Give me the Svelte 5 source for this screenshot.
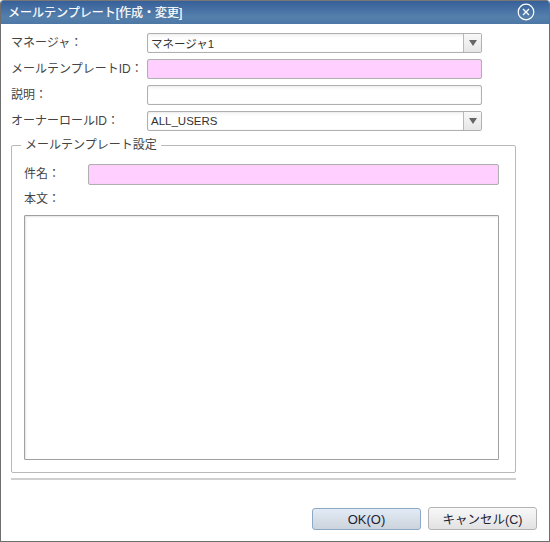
<script>
    const rows = [
        { label: 'マネージャ：', value: 'マネージャ1', select: true },
        { label: 'メールテンプレートID：', value: '', required: true },
        { label: '説明：', value: '' },
        { label: 'オーナーロールID：', value: 'ALL_USERS', select: true },
    ];
</script>

<div class="dialog">
    <div class="titlebar">
        <span class="title">メールテンプレート[作成・変更]</span>
        <svg class="close" width="18" height="18" viewBox="0 0 18 18">
            <circle cx="9" cy="9" r="7.8" fill="none" stroke="#fff" stroke-width="1.2" />
            <path d="M6 6l6 6M12 6l-6 6" fill="none" stroke="#fff" stroke-width="1.3" />
        </svg>
    </div>

    <div class="body">
        <div class="rows">
            {#each rows as row}
                <div class="row">
                    <span class="label">{row.label}</span>
                    <div class="field" class:required={row.required}>
                        <span class="value">{row.value}</span>
                        {#if row.select}
                            <span class="arrow"><i></i></span>
                        {/if}
                    </div>
                </div>
            {/each}
        </div>

        <fieldset class="group">
            <legend>メールテンプレート設定</legend>
            <div class="subject">
                <span class="label">件名：</span>
                <div class="field required"></div>
            </div>
            <div class="label body-label">本文：</div>
            <div class="textarea"></div>
        </fieldset>

        <div class="separator"></div>

        <div class="buttons">
            <button class="ok">OK(O)</button>
            <button>キャンセル(C)</button>
        </div>
    </div>
</div>

<style>
    :global(body) {
        background: #fff;
    }

    .dialog {
        box-sizing: border-box;
        width: 550px;
        height: 542px;
        display: flex;
        flex-direction: column;
        background: #fff;
        border: 1px solid #6e6e6e;
        border-top: 0;
        border-radius: 4px 4px 0 0;
        font-family: "Liberation Sans", "Noto Sans CJK JP", sans-serif;
        font-size: 12px;
        color: #444;
        overflow: hidden;
    }

    .titlebar {
        flex: none;
        height: 23px;
        display: flex;
        align-items: center;
        justify-content: space-between;
        padding: 0 6px 0 7px;
        background: linear-gradient(#37609a, #5580ac 70%, #4d78a6);
        border-top: 1px solid #777;
        color: #fff;
    }

    .title {
        font-size: 12px;
        line-height: 20px;
        -webkit-text-stroke: 0.2px #fff;
    }

    .close {
        margin-right: 8px;
        margin-top: -1px;
    }

    .body {
        flex: 1;
        display: flex;
        flex-direction: column;
        padding: 9px 12px 11px 10px;
    }

    .rows {
        display: flex;
        flex-direction: column;
        gap: 6px;
        width: 471px;
    }

    .row {
        display: flex;
        align-items: center;
    }

    .row .label {
        flex: none;
        width: 136px;
    }

    .label {
        line-height: 18px;
        white-space: nowrap;
    }

    .field {
        box-sizing: border-box;
        flex: 1;
        height: 20px;
        display: flex;
        align-items: center;
        justify-content: space-between;
        background: linear-gradient(#f2f2f2, #fff 4px);
        border: 1px solid #b0b0b0;
        border-radius: 2px;
        box-shadow: inset 0 0 1px #c8c8c8;
    }

    .field.required {
        background: #ffd0ff;
    }

    .value {
        padding-left: 3px;
        font-size: 11.5px;
        color: #333;
    }

    .arrow {
        flex: none;
        box-sizing: border-box;
        width: 18px;
        height: 18px;
        display: flex;
        align-items: center;
        justify-content: center;
        background: linear-gradient(#f8f8f8, #e6e6e6);
        border-left: 1px solid #b8b8b8;
    }

    .arrow i {
        width: 0;
        height: 0;
        border-left: 4px solid transparent;
        border-right: 4px solid transparent;
        border-top: 6px solid #666;
    }

    .group {
        box-sizing: border-box;
        width: 505px;
        height: 336px;
        margin: 6px 0 0 0;
        padding: 11px 16px 0 12px;
        border: 1px solid #b8b8b8;
        border-radius: 2px;
        min-width: 0;
    }

    legend {
        margin-left: -3px;
        padding: 0 4px;
        font-size: 12px;
        line-height: 16px;
    }

    .subject {
        display: flex;
        align-items: center;
    }

    .subject .label {
        flex: none;
        width: 64px;
        margin-top: -2px;
    }

    .subject .field {
        height: 21px;
    }

    .body-label {
        margin-top: 5px;
    }

    .textarea {
        box-sizing: border-box;
        height: 245px;
        margin-top: 7px;
        background: #fff;
        border: 1px solid #a0a0a0;
        border-radius: 1px;
        box-shadow: inset 1px 1px 2px #e4e4e4;
    }

    .separator {
        flex: none;
        width: 505px;
        height: 2px;
        margin-top: 5px;
        background: #d0d0d0;
    }

    .buttons {
        display: flex;
        justify-content: flex-end;
        align-items: flex-end;
        gap: 7px;
        margin-top: auto;
    }

    button {
        box-sizing: border-box;
        width: 109px;
        height: 23px;
        padding: 0;
        font: inherit;
        font-size: 12.5px;
        color: #223;
        background: linear-gradient(#f8f8f8, #e2e2e2);
        border: 1px solid #b4b4b4;
        border-radius: 3px;
    }

    button.ok {
        height: 22px;
        font-size: 13px;
        background: linear-gradient(#e2ebf6, #ccd3dc);
        border-color: #8ba8c6;
    }
</style>
